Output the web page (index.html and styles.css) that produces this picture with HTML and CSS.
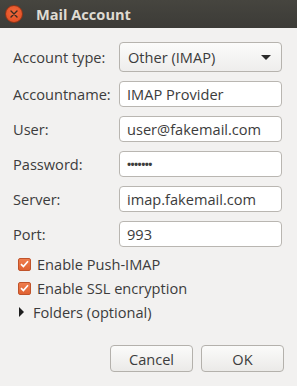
FILE: index.html
```html
<!DOCTYPE html>
<html lang="en">
<head>
    <meta charset="UTF-8">
    <title>Mail Account</title>
    <link rel="stylesheet" href="styles.css">
</head>
<body>
    <div class="window">
        <div class="titlebar">
            <span class="close-btn">
                <svg width="8" height="8" viewBox="0 0 8 8"><path d="M1 1L7 7M7 1L1 7" stroke="#3a2a20" stroke-width="1.4" stroke-linecap="round"/></svg>
            </span>
            <span class="title">Mail Account</span>
        </div>
        <div class="content">
            <div class="form-grid">
                <label class="combo-label">Account type:</label>
                <div class="combo">
                    <span>Other (IMAP)</span>
                    <span class="arrow"></span>
                </div>
                <label>Accountname:</label>
                <div class="entry">IMAP Provider</div>
                <label>User:</label>
                <div class="entry">user@fakemail.com</div>
                <label>Password:</label>
                <div class="entry dots">&bull;&bull;&bull;&bull;&bull;&bull;&bull;</div>
                <label>Server:</label>
                <div class="entry">imap.fakemail.com</div>
                <label>Port:</label>
                <div class="entry">993</div>
            </div>
            <div class="checks">
                <div class="check-row">
                    <span class="checkbox"><svg width="9" height="8" viewBox="0 0 9 8"><path d="M1 4.2L3.4 6.5L8 1.3" fill="none" stroke="#fff" stroke-width="1.7"/></svg></span>
                    Enable Push-IMAP
                </div>
                <div class="check-row">
                    <span class="checkbox"><svg width="9" height="8" viewBox="0 0 9 8"><path d="M1 4.2L3.4 6.5L8 1.3" fill="none" stroke="#fff" stroke-width="1.7"/></svg></span>
                    Enable SSL encryption
                </div>
                <div class="expander">
                    <span class="triangle"></span>
                    Folders (optional)
                </div>
            </div>
            <div class="actions">
                <button>Cancel</button>
                <button>OK</button>
            </div>
        </div>
    </div>
</body>
</html>
```

FILE: styles.css
```css
* {
    margin: 0;
    padding: 0;
    box-sizing: border-box;
}
body {
    background-color: #f2f1f0;
    font-family: 'Open Sans', 'DejaVu Sans', sans-serif;
    font-size: 14.6px;
    color: #3c3c3c;
}
.window {
    width: 297px;
    height: 386px;
    background-color: #f2f1f0;
}
.titlebar {
    height: 28px;
    background: linear-gradient(#46453f, #3c3b37);
    display: flex;
    align-items: center;
    padding-left: 5px;
}
.close-btn {
    width: 18px;
    height: 18px;
    border-radius: 50%;
    background: radial-gradient(circle at 50% 40%, #f26a3d, #df4a1f);
    border: 1px solid #8f3417;
    display: flex;
    align-items: center;
    justify-content: center;
}
.title {
    margin-left: 13px;
    font-weight: bold;
    font-size: 14.6px;
    color: #dfdbd2;
}
.content {
    padding: 14px 15px 0 13px;
}
.form-grid {
    display: grid;
    grid-template-columns: 106px 163px;
    row-gap: 9px;
    align-items: center;
}
.combo {
    height: 30px;
    border: 1px solid #b6b3ae;
    border-radius: 4px;
    background: linear-gradient(#fbfbfa, #eeedec);
    display: flex;
    align-items: center;
    justify-content: space-between;
    padding: 0 10px 0 8px;
}
.arrow {
    width: 0;
    height: 0;
    border-left: 5px solid transparent;
    border-right: 5px solid transparent;
    border-top: 5px solid #2a2a2a;
}
.entry {
    height: 26px;
    border: 1px solid #b9b6b1;
    border-radius: 4px;
    background-color: #fff;
    padding: 0 7px;
    line-height: 24px;
    white-space: nowrap;
}
.dots {
    font-size: 11px;
    font-weight: bold;
    letter-spacing: -0.6px;
}
.checks {
    padding-left: 5px;
    margin-top: 5px;
}
.check-row, .expander {
    height: 24px;
    display: flex;
    align-items: center;
}
.checkbox {
    width: 13px;
    height: 13px;
    border-radius: 2px;
    background: linear-gradient(#ee7d4d, #e06232);
    border: 1px solid #c0532a;
    display: flex;
    align-items: center;
    justify-content: center;
    margin-right: 6px;
}
.triangle {
    width: 0;
    height: 0;
    border-top: 5px solid transparent;
    border-bottom: 5px solid transparent;
    border-left: 5px solid #1e1e1e;
    margin: 0 9px 0 1px;
}
.actions {
    display: flex;
    justify-content: flex-end;
    gap: 8px;
    margin-top: 21px;
    margin-right: -2px;
}
.actions button {
    width: 83px;
    height: 27px;
    border: 1px solid #b4b1ac;
    border-radius: 4px;
    background: linear-gradient(#fbfbfa, #ebeae8);
    font-family: inherit;
    font-size: 14.6px;
    color: #3c3c3c;
}
```
